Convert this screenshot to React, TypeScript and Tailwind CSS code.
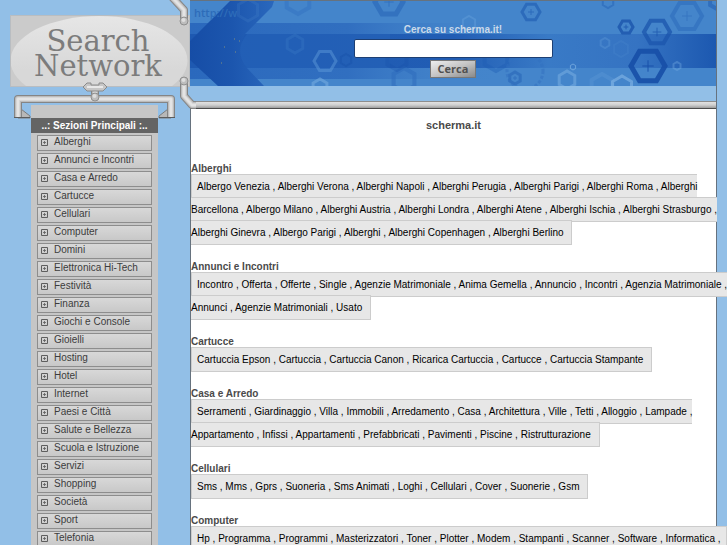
import { Fragment } from 'react';

const MENU = [
  'Alberghi', 'Annunci e Incontri', 'Casa e Arredo', 'Cartucce', 'Cellulari', 'Computer',
  'Domini', 'Elettronica Hi-Tech', 'Festività', 'Finanza', 'Giochi e Console', 'Gioielli',
  'Hosting', 'Hotel', 'Internet', 'Paesi e Città', 'Salute e Bellezza', 'Scuola e Istruzione',
  'Servizi', 'Shopping', 'Società', 'Sport', 'Telefonia',
];

// each inner array is one row of links
const SECTIONS = [
  {
    title: 'Alberghi',
    rows: [
      [
        'Albergo Venezia', 'Alberghi Verona', 'Alberghi Napoli', 'Alberghi Perugia', 'Alberghi Parigi', 'Alberghi Roma',
        'Alberghi\nBarcellona', 'Albergo Milano', 'Alberghi Austria', 'Alberghi Londra', 'Alberghi Atene',
        'Alberghi Ischia', 'Alberghi Strasburgo',
      ],
      ['Alberghi Ginevra', 'Albergo Parigi', 'Alberghi', 'Alberghi Copenhagen', 'Alberghi Berlino'],
    ],
  },
  {
    title: 'Annunci e Incontri',
    rows: [
      [
        'Incontro', 'Offerta', 'Offerte', 'Single', 'Agenzie Matrimoniale', 'Anima Gemella', 'Annuncio', 'Incontri',
        'Agenzia Matrimoniale',
      ],
      ['Annunci', 'Agenzie Matrimoniali', 'Usato'],
    ],
  },
  {
    title: 'Cartucce',
    rows: [['Cartuccia Epson', 'Cartuccia', 'Cartuccia Canon', 'Ricarica Cartuccia', 'Cartucce', 'Cartuccia Stampante']],
  },
  {
    title: 'Casa e Arredo',
    rows: [
      [
        'Serramenti', 'Giardinaggio', 'Villa', 'Immobili', 'Arredamento', 'Casa', 'Architettura', 'Ville', 'Tetti',
        'Alloggio', 'Lampade',
      ],
      ['Appartamento', 'Infissi', 'Appartamenti', 'Prefabbricati', 'Pavimenti', 'Piscine', 'Ristrutturazione'],
    ],
  },
  {
    title: 'Cellulari',
    rows: [['Sms', 'Mms', 'Gprs', 'Suoneria', 'Sms Animati', 'Loghi', 'Cellulari', 'Cover', 'Suonerie', 'Gsm']],
  },
  {
    title: 'Computer',
    rows: [
      [
        'Hp', 'Programma', 'Programmi', 'Masterizzatori', 'Toner', 'Plotter', 'Modem', 'Stampanti', 'Scanner',
        'Software', 'Informatica',
      ],
      [],
    ],
  },
];

type Nut = { x: number; y: number; r: number; w: number; color: string; o: number; plus?: boolean; flat?: boolean };

const NUTS: Nut[] = [
  { x: 341, y: 11, r: 9, w: 3, color: '#2361b5', o: 0.7, plus: true, flat: true },
  { x: 436, y: 26, r: 7, w: 3, color: '#1b55ad', o: 0.8, plus: true, flat: true },
  { x: 467, y: 31, r: 13, w: 4, color: '#1b55ad', o: 0.75, plus: true, flat: true },
  { x: 458, y: 65, r: 17, w: 5, color: '#174fa8', o: 0.9, plus: true, flat: true },
  { x: 497, y: 15, r: 15, w: 4, color: '#2e6dbd', o: 0.6, plus: true, flat: true },
  { x: 279, y: 22, r: 7, w: 2, color: '#6aa3dc', o: 0.4 },
  { x: 306, y: 57, r: 13, w: 4, color: '#1f5cb3', o: 0.4 },
  { x: 377, y: 79, r: 9, w: 3, color: '#73aae0', o: 0.6 },
  { x: 412, y: 85, r: 12, w: 4, color: '#73aae0', o: 0.2 },
  { x: 432, y: 86, r: 11, w: 3, color: '#83b5e6', o: 0.6 },
  { x: 383, y: 66, r: 3, w: 1, color: '#83b5e6', o: 0.7 },
  { x: 487, y: 65, r: 4, w: 2, color: '#73aae0', o: 0.4 },
  { x: 325, y: 77, r: 6, w: 3, color: '#2361b5', o: 0.5, plus: true },
  { x: 135, y: 60, r: 11, w: 3, color: '#5c98d8', o: 0.5, flat: true },
  { x: 156, y: 59, r: 6, w: 2, color: '#174fa8', o: 0.4 },
  { x: 130, y: 86, r: 8, w: 3, color: '#73aae0', o: 0.6 },
  { x: 105, y: 43, r: 9, w: 3, color: '#4585cb', o: 0.25 },
  { x: 108, y: 0, r: 13, w: 4, color: '#2b69bc', o: 0.35 },
  { x: 199, y: 1, r: 14, w: 5, color: '#2361b5', o: 0.5, plus: true, flat: true },
  { x: 214, y: 79, r: 12, w: 4, color: '#2b69bc', o: 0.5 },
  { x: 207, y: 58, r: 11, w: 4, color: '#174fa8', o: 0.3 },
  { x: 58, y: 9, r: 11, w: 3, color: '#5c98d8', o: 0.15 },
  { x: 415, y: 42, r: 5, w: 2, color: '#5c98d8', o: 0.4 },
  { x: 431, y: 48, r: 8, w: 2, color: '#5c98d8', o: 0.15 },
  { x: 418, y: 1, r: 6, w: 2, color: '#2361b5', o: 0.5 },
  { x: 527, y: 0, r: 8, w: 4, color: '#2361b5', o: 0.6 },
];

function hexagon(n: Nut) {
  return [0, 1, 2, 3, 4, 5]
    .map(i => {
      const a = (Math.PI / 3) * i + (n.flat ? 0 : Math.PI / 6);
      return `${(n.x + n.r * Math.cos(a)).toFixed(1)},${(n.y + n.r * Math.sin(a)).toFixed(1)}`;
    })
    .join(' ');
}

function BannerArt() {
  return (
    <svg className="absolute inset-0 h-full w-full" viewBox="0 0 527 85" preserveAspectRatio="xMinYMid slice" aria-hidden="true">
      <defs>
        <linearGradient id="outer" x1="0" x2="1">
          <stop offset="0" stopColor="#2b69bd" />
          <stop offset="0.3" stopColor="#316fc0" />
          <stop offset="0.6" stopColor="#4585cb" stopOpacity="0" />
        </linearGradient>
        <linearGradient id="inner" x1="0" x2="1">
          <stop offset="0" stopColor="#1e59b1" />
          <stop offset="0.5" stopColor="#215db4" />
          <stop offset="0.68" stopColor="#397ac6" />
          <stop offset="0.85" stopColor="#3573c2" />
          <stop offset="1" stopColor="#1c58b0" />
        </linearGradient>
        <linearGradient id="chevron" x1="0" x2="1">
          <stop offset="0" stopColor="#164da6" />
          <stop offset="0.5" stopColor="#1c56ae" />
          <stop offset="1" stopColor="#2a68bd" />
        </linearGradient>
      </defs>
      <rect width="527" height="85" fill="#4485cb" />
      <rect y="22" width="527" height="56" fill="url(#outer)" />
      <rect y="33" width="527" height="34" fill="url(#inner)" />
      <path d="M0 40 40 0H84L82 6 55 33Q45 50 57 67L74 85H28L0 59Z" fill="url(#chevron)" />
      <path d="M57 33H200V67H57Q43 50 57 33Z" fill="#2867bb" opacity="0.4" />
      {NUTS.map((n, i) => (
        <g key={i} stroke={n.color} opacity={n.o} fill="none">
          <polygon points={hexagon(n)} strokeWidth={n.w} />
          {n.plus && <path d={`M${n.x - n.r / 3} ${n.y}h${(n.r * 2) / 3}M${n.x} ${n.y - n.r / 3}v${(n.r * 2) / 3}`} />}
        </g>
      ))}
      <circle cx="335" cy="70" r="18" fill="none" stroke="#3270c0" strokeWidth="3" strokeDasharray="3 2" opacity="0.5" />
      <path d="M34 46h1M49 40h1M45 51h1M31 62h1M44 38h1" stroke="#83907c" />
    </svg>
  );
}

// grey tube drawn as stacked strokes, dark edge to light core
function Tube({ d, w = 8 }: { d: string; w?: number }) {
  return (
    <g fill="none" strokeLinejoin="round">
      <path d={d} stroke="#858585" strokeWidth={w} />
      <path d={d} stroke="#bcbcbc" strokeWidth={w - 2} />
      <path d={d} stroke="#d6d6d6" strokeWidth={w - 4} />
      <path d={d} stroke="#e4e4e4" strokeWidth={w - 6} />
    </g>
  );
}

function Rivet({ x, y }: { x: number; y: number }) {
  return (
    <g>
      <circle cx={x} cy={y} r="4" fill="#bdbdbd" stroke="#8f8f8f" />
      <circle cx={x - 0.5} cy={y - 1} r="2" fill="#dedede" />
    </g>
  );
}

function Sidebar() {
  return (
    <aside className="relative w-[190px] shrink-0">
      <div className="relative mt-[15px] ml-[10px] flex h-[72px] items-center justify-center overflow-hidden border border-[#b9bdc1] bg-[#cbcbcb]">
        <svg className="absolute inset-0 h-full w-full" viewBox="0 0 180 72" aria-hidden="true">
          <defs>
            <linearGradient id="logo" x1="0" x2="0" y1="0" y2="1">
              <stop offset="0" stopColor="#e6e6e6" />
              <stop offset="0.6" stopColor="#d8d8d8" />
            </linearGradient>
          </defs>
          <ellipse cx="89" cy="46" rx="91" ry="46" fill="url(#logo)" />
        </svg>
        <h1 className="relative pt-[5px] pr-[4px] text-center font-['DejaVu_Serif',serif] text-[29px] leading-[25px] text-[#7c7c7c]">
          Search
          <br />
          Network
        </h1>
      </div>

      <div className="mt-[18px] ml-[31px] w-[127px] bg-[#c6c6c6] pt-[13px]">
        <h2 className="bg-[#646464] text-center text-[10px] leading-[15px] font-bold text-white">..: Sezioni Principali :..</h2>
        <ul className="flex flex-col gap-[2px] px-[6px] pt-[2px]">
          {MENU.map(item => (
            <li key={item}>
              <a
                href="#"
                className="flex h-[16px] items-center gap-[6px] border border-[#8d8d8d] bg-linear-to-b from-[#d8d8d8] to-[#c8c8c8] pb-[2px] pl-[3px] text-[10px] leading-[12px] text-[#3c3c3c]"
              >
                <svg width="7" height="7" viewBox="0 0 7 7" fill="none" stroke="#5e5e5e" className="shrink-0" aria-hidden="true">
                  <path d="M.5.5h6v6h-6z" />
                  <path d="M2 3.500h3M3.500 2v3" opacity="0.8" />
                </svg>
                {item}
              </a>
            </li>
          ))}
        </ul>
      </div>

      <svg className="absolute top-[80px] left-[10px]" width="170" height="40" viewBox="10 80 170 40" aria-hidden="true">
        <path d="M21 109l9 7v2h-12zM168 109l-9 7v2h12z" fill="#b8b8b8" stroke="#7c7c7c" />
        <Tube d="M18 118V99H171V118" />
        <path d="M14 117.500H30M159 117.500H175" stroke="#5c5c5c" />
        <Tube d="M95 90V97" />
        <Rivet x={95} y={97} />
        <path d="M83 87l4-4h4v2h8v-2h4l4 4-4 4H87z" fill="#c6c6c6" stroke="#8a8a8a" />
        <path d="M87 87h16" stroke="#e8e8e8" strokeWidth="2" />
      </svg>
    </aside>
  );
}

function SearchBanner() {
  return (
    <header className="border-t border-[#66727e]">
      <div className="relative h-[85px] overflow-hidden">
        <BannerArt />
        <span className="absolute top-[5px] left-[4px] font-['Open_Sans',sans-serif] text-[11px] leading-[14px] font-semibold text-[#2d6cb9]">
          http://w
        </span>
        <form className="relative flex flex-col items-center pt-[22px]" onSubmit={e => e.preventDefault()}>
          <label htmlFor="q" className="text-[10px] leading-[13px] font-bold text-[#cbdaea]">
            Cerca su scherma.it!
          </label>
          <input
            id="q"
            type="text"
            className="mt-[3px] h-[19px] w-[199px] rounded-[2px] border border-[#1d3f73] bg-white px-1 text-[11px] text-black outline-none"
          />
          <button
            type="submit"
            className="mt-[2px] h-[18px] w-[46px] border border-[#777777] bg-linear-to-br from-[#eeeeee] via-[#c4c4c4] to-[#8a8a8a] font-['Open_Sans',sans-serif] text-[11px] leading-[16px] font-bold text-[#505050]"
          >
            Cerca
          </button>
        </form>
      </div>
      <div className="h-[15px]" />
      <div className="h-[8px] border-t border-b border-t-[#8d8d8d] border-b-[#4c4c4c] bg-linear-to-b from-[#e2e2e2] via-[#cfcfcf] to-[#9c9c9c]" />
    </header>
  );
}

function LinkRows({ rows }: { rows: string[][] }) {
  return rows.map((row, r) => (
    <Fragment key={r}>
      {row.map((link, i) => {
        const lastInRow = i === row.length - 1;
        let sep = ' , ';
        if (lastInRow) sep = r === rows.length - 1 ? ' ' : ' ,\n';
        return (
          <Fragment key={link}>
            <a href="#">{link}</a>
            {sep}
          </Fragment>
        );
      })}
    </Fragment>
  ));
}

export default function App() {
  return (
    <div className="flex h-screen overflow-hidden bg-[#92bfe7] pr-[10px] font-['Liberation_Sans',Arial,sans-serif]">
      <Sidebar />
      <div className="relative flex min-w-0 flex-1 flex-col border-r border-[#66727e]">
        <SearchBanner />
        <main className="flex-1 border-l border-[#66727e] bg-white pt-[10px] text-[10px]">
          <h2 className="text-center text-[11px] leading-[13px] font-bold text-[#4a4a4a]">scherma.it</h2>
          <div className="mt-[30px] flex flex-col gap-[16px]">
            {SECTIONS.map(s => (
              <section key={s.title}>
                <h3 className="leading-[13px] font-bold text-[#4a4a4a]">{s.title}</h3>
                <p className="leading-[23px] whitespace-pre text-black">
                  <span className="border border-[#cccccc] bg-[#e7e7e7] px-[5px] py-[6px]">
                    <LinkRows rows={s.rows} />
                  </span>
                </p>
              </section>
            ))}
          </div>
        </main>
        <svg className="absolute top-0 left-[-24px]" width="34" height="110" viewBox="166 0 34 110" aria-hidden="true">
          <Tube d="M171 -4L184 10V20" />
          <Rivet x={184} y={21} />
          <Tube d="M184 80V96L192 105H196" />
          <Rivet x={184} y={81} />
        </svg>
      </div>
    </div>
  );
}
